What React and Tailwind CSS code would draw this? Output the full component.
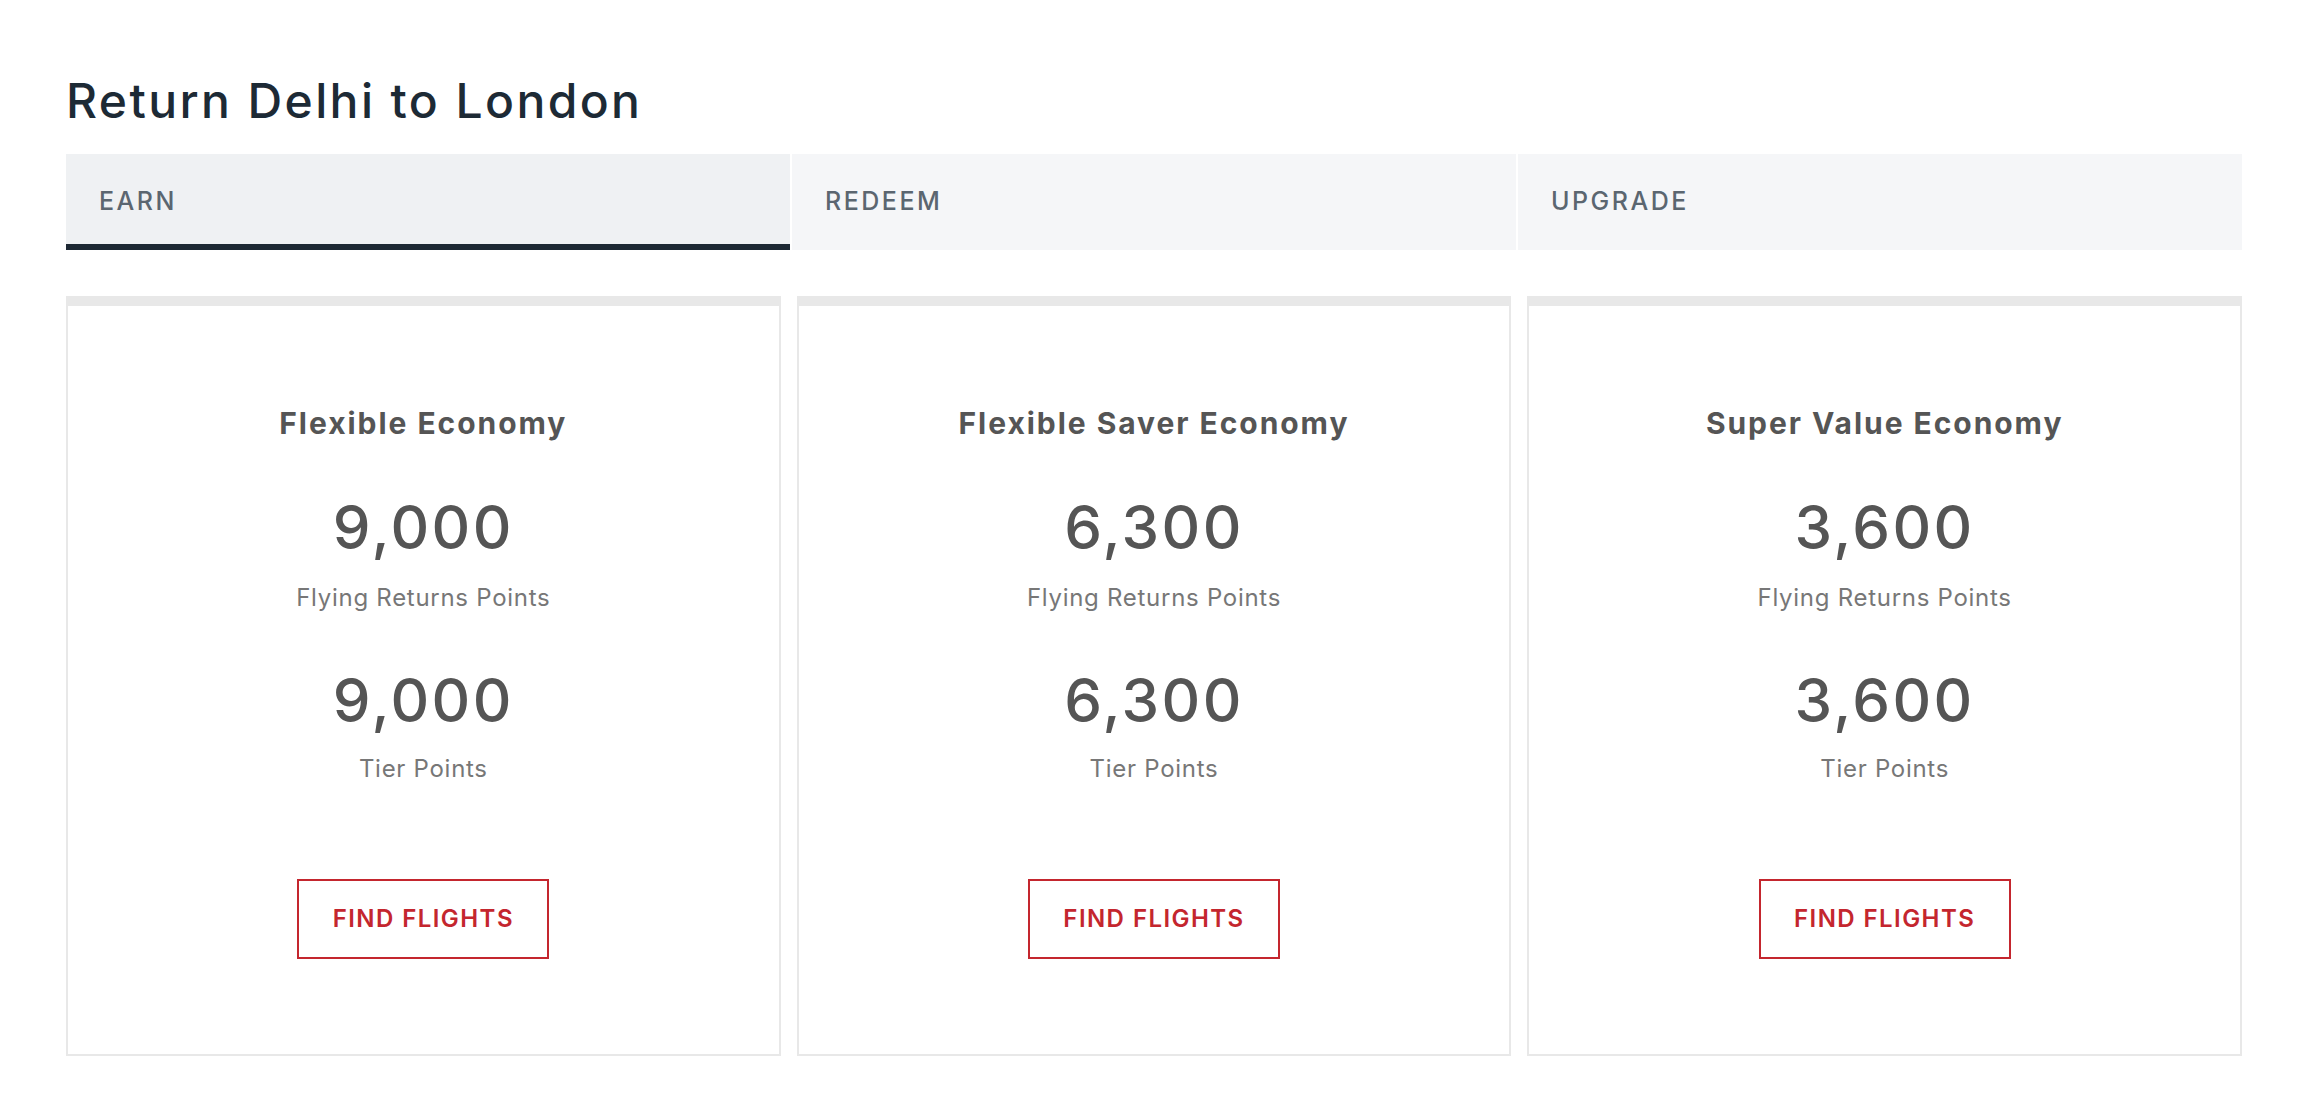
import { useState } from "react";

// ─── Data ─────────────────────────────────────────────────────────────────────

const TABS = ["EARN", "REDEEM", "UPGRADE"];

const FARES = [
  { name: "Flexible Economy", points: "9,000", tier: "9,000" },
  { name: "Flexible Saver Economy", points: "6,300", tier: "6,300" },
  { name: "Super Value Economy", points: "3,600", tier: "3,600" },
];

// ─── Fare Card ────────────────────────────────────────────────────────────────

function FareCard({ fare }) {
  return (
    <div className="flex h-[760px] flex-col items-center border-2 border-t-[10px] border-[#e8e8e8] bg-white pt-[102px]">
      <h2 className="text-[30px] font-bold leading-none tracking-[0.065em] text-[#555555]">{fare.name}</h2>

      <p className="mt-[59px] text-[60px] font-medium leading-none tracking-[0.04em] text-[#555555]">{fare.points}</p>
      <p className="mt-[29px] text-[24px] leading-none tracking-[0.03em] text-[#777777]">Flying Returns Points</p>

      <p className="mt-[60px] text-[60px] font-medium leading-none tracking-[0.04em] text-[#555555]">{fare.tier}</p>
      <p className="mt-[27px] text-[24px] leading-none tracking-[0.03em] text-[#777777]">Tier Points</p>

      <button className="mt-[98px] flex h-[80px] w-[252px] items-center justify-center border-2 border-[#c4262e] bg-white text-[24px] font-semibold leading-none tracking-[0.06em] text-[#c4262e]">
        FIND FLIGHTS
      </button>
    </div>
  );
}

// ─── Main Page ────────────────────────────────────────────────────────────────

export default function App() {
  const [active, setActive] = useState("EARN");

  return (
    <div
      className="min-h-screen bg-white pl-[66px] pr-[62px] pt-[72px]"
      style={{ fontFamily: "Inter, 'Noto Sans', sans-serif" }}
    >
      <h1 className="text-[48px] font-medium leading-[58px] tracking-[0.05em] text-[#1d2a35]">
        Return Delhi to London
      </h1>

      <div className="mt-[24px] grid grid-cols-3 gap-[2px]">
        {TABS.map((tab) => {
          const isActive = tab === active;
          return (
            <button
              key={tab}
              onClick={() => setActive(tab)}
              className={`flex h-[96px] items-center border-b-[6px] pl-[33px] pt-[5px] text-left text-[25px] font-medium tracking-[0.1em] text-[#5b6670] ${
                isActive ? "border-[#1d2833] bg-[#eff1f3]" : "border-[#f5f6f8] bg-[#f5f6f8]"
              }`}
            >
              {tab}
            </button>
          );
        })}
      </div>

      <div className="mt-[46px] grid grid-cols-3 gap-4">
        {FARES.map((fare) => (
          <FareCard key={fare.name} fare={fare} />
        ))}
      </div>
    </div>
  );
}
